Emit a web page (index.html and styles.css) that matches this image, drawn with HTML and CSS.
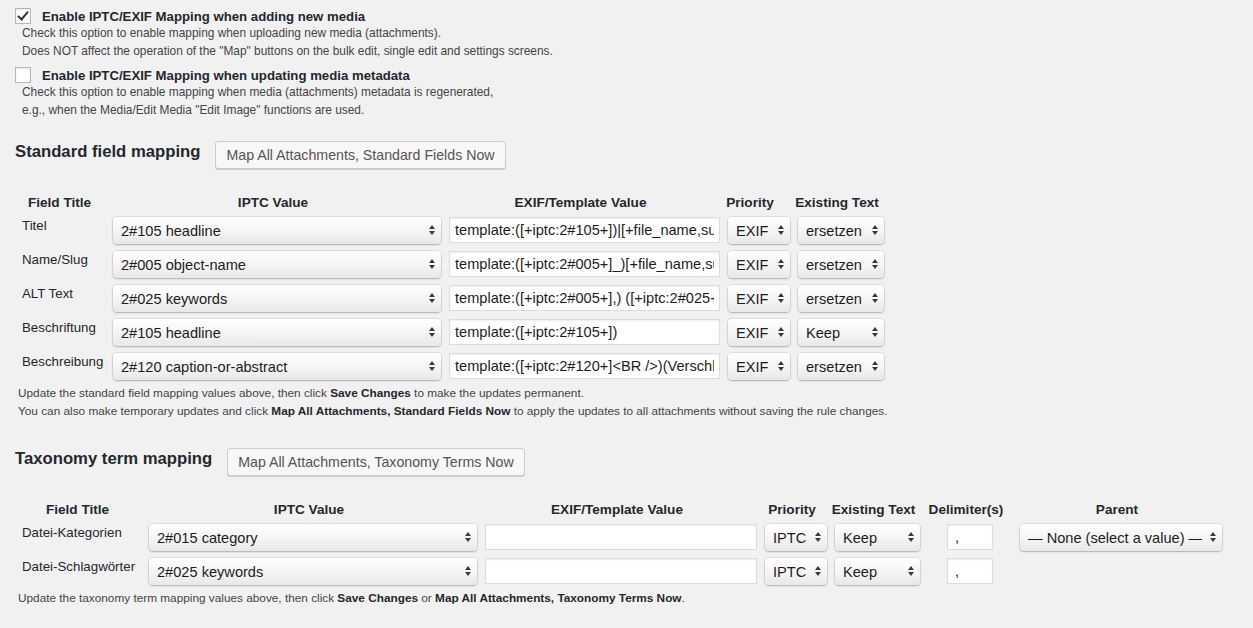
FILE: index.html
```html
<!DOCTYPE html>
<html lang="en">

<head>
    <meta charset="UTF-8">
    <title>IPTC/EXIF Mapping</title>
    <link rel="stylesheet" href="styles.css">
</head>

<body>
    <div class="wrap">
        <label class="option">
            <input type="checkbox" checked>
            <span>Enable IPTC/EXIF Mapping when adding new media</span>
        </label>
        <p class="desc">Check this option to enable mapping when uploading new media (attachments).<br>
            Does NOT affect the operation of the "Map" buttons on the bulk edit, single edit and settings screens.</p>

        <label class="option second">
            <input type="checkbox">
            <span>Enable IPTC/EXIF Mapping when updating media metadata</span>
        </label>
        <p class="desc">Check this option to enable mapping when media (attachments) metadata is regenerated,<br>
            e.g., when the Media/Edit Media "Edit Image" functions are used.</p>

        <div class="section-head">
            <h2>Standard field mapping</h2>
            <button type="button" class="button">Map All Attachments, Standard Fields Now</button>
        </div>

        <table class="mapping standard">
            <thead>
                <tr>
                    <th class="col-title">Field Title</th>
                    <th>IPTC Value</th>
                    <th>EXIF/Template Value</th>
                    <th class="col-priority">Priority</th>
                    <th>Existing Text</th>
                </tr>
            </thead>
            <tbody>
                <tr>
                    <td class="col-title">Titel</td>
                    <td><span class="select iptc"><select><option>2#105 headline</option></select></span></td>
                    <td><input type="text" class="template" value="template:([+iptc:2#105+])|[+file_name,substr=0+]"></td>
                    <td><span class="select priority"><select><option>EXIF</option></select></span></td>
                    <td><span class="select existing"><select><option>ersetzen</option></select></span></td>
                </tr>
                <tr>
                    <td class="col-title">Name/Slug</td>
                    <td><span class="select iptc"><select><option>2#005 object-name</option></select></span></td>
                    <td><input type="text" class="template" value="template:([+iptc:2#005+]_)[+file_name,substr=0+]"></td>
                    <td><span class="select priority"><select><option>EXIF</option></select></span></td>
                    <td><span class="select existing"><select><option>ersetzen</option></select></span></td>
                </tr>
                <tr>
                    <td class="col-title">ALT Text</td>
                    <td><span class="select iptc"><select><option>2#025 keywords</option></select></span></td>
                    <td><input type="text" class="template" value="template:([+iptc:2#005+],) ([+iptc:2#025+])"></td>
                    <td><span class="select priority"><select><option>EXIF</option></select></span></td>
                    <td><span class="select existing"><select><option>ersetzen</option></select></span></td>
                </tr>
                <tr>
                    <td class="col-title">Beschriftung</td>
                    <td><span class="select iptc"><select><option>2#105 headline</option></select></span></td>
                    <td><input type="text" class="template" value="template:([+iptc:2#105+])"></td>
                    <td><span class="select priority"><select><option>EXIF</option></select></span></td>
                    <td><span class="select existing"><select><option>Keep</option></select></span></td>
                </tr>
                <tr>
                    <td class="col-title">Beschreibung</td>
                    <td><span class="select iptc"><select><option>2#120 caption-or-abstract</option></select></span></td>
                    <td><input type="text" class="template" value="template:([+iptc:2#120+]<BR />)(Verschlagwortung)"></td>
                    <td><span class="select priority"><select><option>EXIF</option></select></span></td>
                    <td><span class="select existing"><select><option>ersetzen</option></select></span></td>
                </tr>
            </tbody>
        </table>
        <p class="note">Update the standard field mapping values above, then click <strong>Save Changes</strong> to make the updates permanent.<br>
            You can also make temporary updates and click <strong>Map All Attachments, Standard Fields Now</strong> to apply the updates to all attachments without saving the rule changes.</p>

        <div class="section-head second">
            <h2>Taxonomy term mapping</h2>
            <button type="button" class="button">Map All Attachments, Taxonomy Terms Now</button>
        </div>

        <table class="mapping taxonomy">
            <thead>
                <tr>
                    <th class="col-title">Field Title</th>
                    <th>IPTC Value</th>
                    <th>EXIF/Template Value</th>
                    <th>Priority</th>
                    <th>Existing Text</th>
                    <th class="col-delim">Delimiter(s)</th>
                    <th>Parent</th>
                </tr>
            </thead>
            <tbody>
                <tr>
                    <td class="col-title">Datei-Kategorien</td>
                    <td><span class="select iptc"><select><option>2#015 category</option></select></span></td>
                    <td><input type="text" class="template" value=""></td>
                    <td><span class="select priority"><select><option>IPTC</option></select></span></td>
                    <td><span class="select existing"><select><option>Keep</option></select></span></td>
                    <td class="col-delim"><input type="text" class="delim" value=","></td>
                    <td><span class="select parent"><select><option>— None (select a value) —</option></select></span></td>
                </tr>
                <tr>
                    <td class="col-title">Datei-Schlagwörter</td>
                    <td><span class="select iptc"><select><option>2#025 keywords</option></select></span></td>
                    <td><input type="text" class="template" value=""></td>
                    <td><span class="select priority"><select><option>IPTC</option></select></span></td>
                    <td><span class="select existing"><select><option>Keep</option></select></span></td>
                    <td class="col-delim"><input type="text" class="delim" value=","></td>
                    <td></td>
                </tr>
            </tbody>
        </table>
        <p class="note">Update the taxonomy term mapping values above, then click <strong>Save Changes</strong> or <strong>Map All Attachments, Taxonomy Terms Now</strong>.</p>
    </div>
</body>

</html>
```

FILE: styles.css
```css
body {
    margin: 0;
    background-color: #f1f1f1;
    font-family: "Liberation Sans", Arial, sans-serif;
    color: #444;
}

.wrap {
    padding-top: 8px;
}

/* checkbox options */
.option {
    display: flex;
    align-items: center;
    gap: 11px;
    height: 16px;
    padding-left: 15px;
    font-size: 13.2px;
    font-weight: bold;
    color: #23282d;
}

.option.second {
    margin-top: 7px;
}

.option input {
    appearance: none;
    -webkit-appearance: none;
    position: relative;
    width: 16px;
    height: 16px;
    margin: 0;
    border: 1px solid #b4b9be;
    background-color: #fff;
    box-shadow: inset 0 1px 2px rgba(0, 0, 0, 0.1);
    box-sizing: border-box;
}

.option input:checked::before {
    content: "";
    position: absolute;
    left: 4px;
    top: 0;
    width: 4px;
    height: 9px;
    border-right: 2px solid #333;
    border-bottom: 2px solid #333;
    transform: rotate(40deg);
}

.desc {
    margin: 0 0 0 22px;
    font-size: 11.9px;
    line-height: 18px;
}

/* section headers */
.section-head {
    display: flex;
    align-items: flex-start;
    gap: 15px;
    margin: 22px 0 0 15px;
}

.section-head.second {
    margin-top: 28px;
}

.section-head h2 {
    margin: 0;
    font-size: 16.7px;
    line-height: 21px;
    color: #23282d;
}

.button {
    height: 28px;
    padding: 0 10px;
    font-family: inherit;
    font-size: 14.2px;
    color: #555;
    background-color: #f7f7f7;
    border: 1px solid #ccc;
    border-radius: 3px;
    box-shadow: 0 1px 0 #ccc;
    cursor: pointer;
}

/* mapping tables */
.mapping {
    margin: 23px 0 0 14px;
    border-collapse: collapse;
}

.mapping th {
    padding: 3px 4px;
    font-size: 13.6px;
    line-height: 16px;
    color: #23282d;
    text-align: center;
    white-space: nowrap;
}

.standard th.col-priority {
    padding-right: 14px;
}

.mapping td {
    padding: 3px 0 4px 8px;
    font-size: 13.3px;
    line-height: 17px;
    color: #23282d;
    vertical-align: top;
    white-space: nowrap;
}

.standard .col-title {
    width: 83px;
}

.taxonomy .col-title {
    width: 119px;
}

.mapping td.col-title {
    text-align: left;
}

.mapping td.col-delim {
    width: 84px;
    text-align: center;
}

/* select boxes */
.select {
    position: relative;
    display: inline-block;
    vertical-align: top;
}

.select select {
    appearance: none;
    -webkit-appearance: none;
    display: block;
    width: 100%;
    height: 27px;
    margin: 0;
    padding: 0 20px 0 8px;
    font-family: inherit;
    font-size: 14.6px;
    color: #1d1d1d;
    border: none;
    border-radius: 4px;
    background: linear-gradient(#ffffff, #f4f4f4 55%, #e8e8e8);
    box-shadow: 0 0 0 1px rgba(0, 0, 0, 0.07), 0 1px 2px rgba(0, 0, 0, 0.22);
}

.select::before,
.select::after {
    content: "";
    position: absolute;
    right: 6px;
    border-left: 3px solid transparent;
    border-right: 3px solid transparent;
    pointer-events: none;
}

.select::before {
    top: 8px;
    border-bottom: 4px solid #3a3a3a;
}

.select::after {
    top: 14px;
    border-top: 4px solid #3a3a3a;
}

.select.iptc {
    width: 328px;
}

.select.priority {
    width: 62px;
}

.standard .select.existing {
    width: 86px;
}

.taxonomy .select.existing {
    width: 85px;
}

.select.parent {
    width: 202px;
}

/* text inputs */
input[type="text"] {
    display: block;
    height: 26px;
    margin: 0;
    padding: 0 5px;
    font-family: inherit;
    font-size: 14.6px;
    color: #1d1d1d;
    background-color: #fff;
    border: 1px solid #ddd;
    box-shadow: inset 0 1px 2px rgba(0, 0, 0, 0.07);
    box-sizing: border-box;
}

.standard .template {
    width: 271px;
}

.taxonomy .template {
    width: 272px;
}

input.delim {
    width: 46px;
    margin: 0 auto;
    padding-left: 7px;
}

.note {
    margin: 0 0 0 18px;
    font-size: 11.8px;
    line-height: 18px;
}

.note strong {
    color: #23282d;
}
```
